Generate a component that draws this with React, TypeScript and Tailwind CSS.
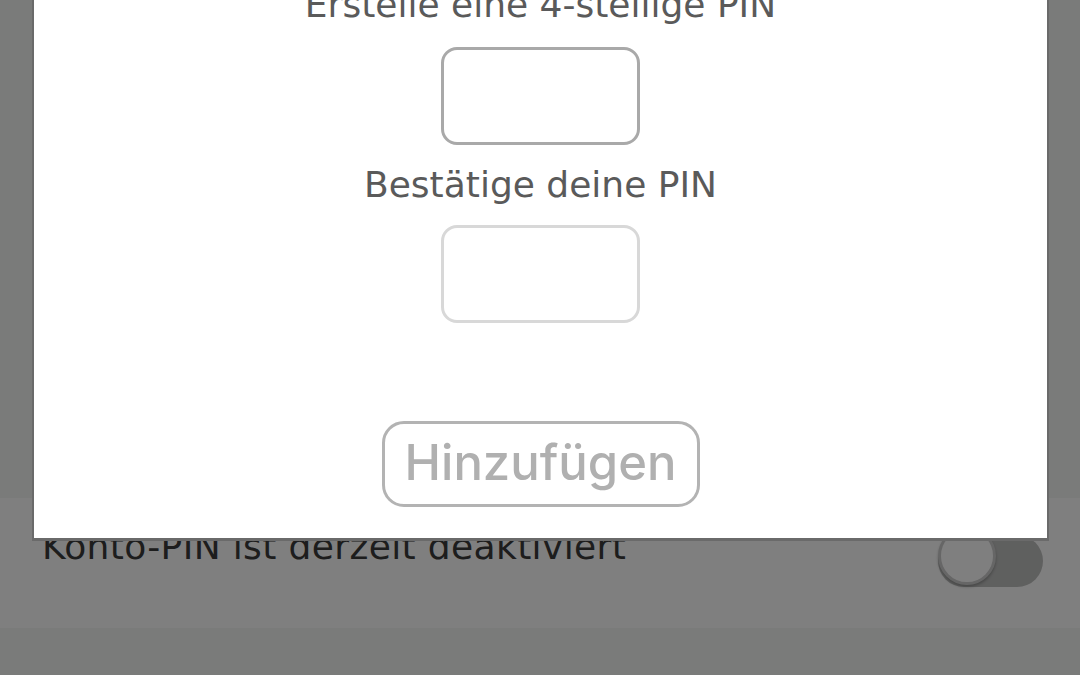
// PIN setup dialog over the account settings row
function Toggle() {
  return (
    <div className="relative h-[60px] w-[105px]">
      <div className="absolute left-0 top-[8px] h-[52px] w-[105px] rounded-full bg-[#bfc0bf]" />
      <div className="absolute left-0 top-0 h-[58px] w-[58px] rounded-full border-[3px] border-[#cdcdcd] bg-white shadow-[0_2px_3px_rgba(0,0,0,0.25)]" />
    </div>
  );
}

function PinInput({ active }: { active?: boolean }) {
  return (
    <input
      type="password"
      inputMode="numeric"
      maxLength={4}
      aria-label="PIN"
      className={[
        "h-[98px] w-[199px] rounded-[16px] border-[3px] bg-white text-center outline-none",
        active ? "border-[#a9a9a9]" : "border-[#d8d8d8]",
      ].join(" ")}
    />
  );
}

export default function App() {
  return (
    <div className="relative h-[675px] w-full overflow-hidden bg-[#f5f6f5] font-['DejaVu_Sans',sans-serif]">
      {/* settings page underneath */}
      <div className="flex h-full flex-col">
        <div className="h-[498px]" />
        <div className="flex h-[130px] items-start justify-between bg-white pl-[42px] pr-[37px]">
          <span className="mt-[27px] text-[36px] leading-[44px] tracking-[0.36px] text-[#3a3a3a]">
            Konto-PIN ist derzeit deaktiviert
          </span>
          <div className="mt-[29px]">
            <Toggle />
          </div>
        </div>
        <div className="flex-1" />
      </div>

      {/* dim backdrop */}
      <div className="absolute inset-0 bg-black/50" />

      {/* dialog */}
      <div className="absolute bottom-[134px] left-[32px] w-[1017px] border-x-2 border-b-[3px] border-[#6a6a6a] bg-white pb-[31px] pt-6">
        <div className="flex flex-col items-center text-[#5a5a5a]">
          <h2 className="text-[36px] font-normal leading-[44px]">Erstelle eine 4-stellige PIN</h2>
          <div className="mt-[20px]">
            <PinInput active />
          </div>
          <p className="mt-[18px] text-[36px] leading-[44px]">Bestätige deine PIN</p>
          <div className="mt-[18px]">
            <PinInput />
          </div>
          <button className="mt-[98px] flex h-[86px] w-[318px] items-center justify-center rounded-[22px] border-[3px] border-[#b3b3b3] bg-white pb-[4px] font-['Inter',sans-serif] text-[49px] font-medium leading-none text-[#b0b0b0]">
            Hinzufügen
          </button>
        </div>
      </div>
    </div>
  );
}
